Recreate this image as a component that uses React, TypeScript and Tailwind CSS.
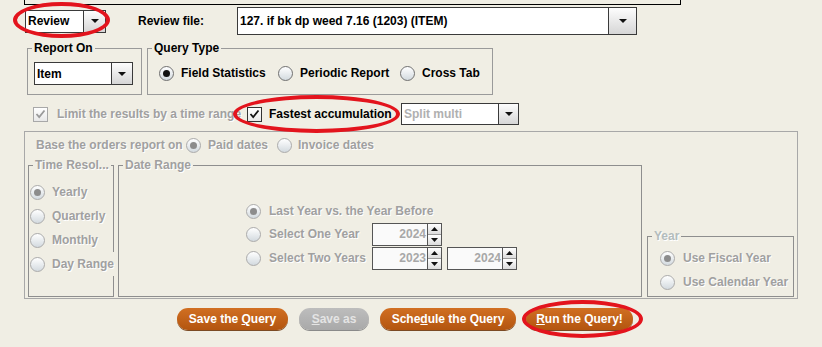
import React from "react";

const muted = "text-[#a0a0a0] [text-shadow:1px_1px_0_#ffffff]";

function Tri({ up = false, small = false }: { up?: boolean; small?: boolean }) {
  const w = small ? 7 : 8;
  const h = 4;
  return (
    <svg width={w} height={h} viewBox={`0 0 ${w} ${h}`} className="block">
      <polygon points={up ? `0,${h} ${w / 2},0 ${w},${h}` : `0,0 ${w},0 ${w / 2},${h}`} fill="#111" />
    </svg>
  );
}

function Combo({
  text,
  className,
  btn,
  dim = false,
}: {
  text: string;
  className: string;
  btn: string;
  dim?: boolean;
}) {
  return (
    <div className={`flex bg-white border border-[#3a3a3a] ${className}`}>
      <div
        className={`flex-1 flex items-center pl-[2px] whitespace-nowrap overflow-hidden ${
          dim ? "text-[#b0b0b0]" : "text-black"
        }`}
      >
        {text}
      </div>
      <div
        className={`${btn} border-l border-[#3a3a3a] bg-linear-to-b from-[#fdfdfd] to-[#d6d6d6] flex items-center justify-center`}
      >
        <Tri />
      </div>
    </div>
  );
}

function Radio({ on = false, dim = false }: { on?: boolean; dim?: boolean }) {
  return (
    <span
      className={`w-[15px] h-[15px] rounded-full border shrink-0 flex items-center justify-center bg-linear-to-b from-[#ffffff] to-[#d3dadf] ${
        dim ? "border-[#ababab]" : "border-[#707070]"
      }`}
    >
      {on && (
        <span className={`w-[7px] h-[7px] rounded-full ${dim ? "bg-[#8c8c8c]" : "bg-[#111111]"}`} />
      )}
    </span>
  );
}

function Check({ dim = false }: { dim?: boolean }) {
  return (
    <span
      className={`w-[15px] h-[15px] border shrink-0 flex items-center justify-center bg-linear-to-b from-[#ffffff] to-[#e8e8e8] ${
        dim ? "border-[#a8a8a8]" : "border-[#333333]"
      }`}
    >
      <svg width="11" height="10" viewBox="0 0 11 10">
        <path
          d="M1.5 5 L4.2 8 L9.5 1.5"
          fill="none"
          stroke={dim ? "#9a9a9a" : "#111"}
          strokeWidth="1.8"
        />
      </svg>
    </span>
  );
}

function Spinner({ value, className = "" }: { value: string; className?: string }) {
  return (
    <div className={`flex w-[70px] h-[23px] ${className}`}>
      <div className="flex-1 bg-[#fafafa] border border-[#555555] flex items-center justify-end pr-[1px] text-[#a8a8a8]">
        {value}
      </div>
      <div className="w-[14px] flex flex-col border-y border-r border-[#555555]">
        <div className="flex-1 flex items-center justify-center bg-linear-to-b from-[#ffffff] to-[#dcdcdc] border-b border-[#9a9a9a]">
          <Tri up small />
        </div>
        <div className="flex-1 flex items-center justify-center bg-linear-to-b from-[#ffffff] to-[#dcdcdc]">
          <Tri small />
        </div>
      </div>
    </div>
  );
}

function Group({
  title,
  className,
  legend = "",
  children,
}: {
  title: string;
  className: string;
  legend?: string;
  children?: React.ReactNode;
}) {
  return (
    <fieldset className={`border shrink-0 min-w-0 ${className}`}>
      <legend className={`ml-[4px] px-[2px] leading-[14px] ${legend}`}>{title}</legend>
      {children}
    </fieldset>
  );
}

function Btn({ children, grey = false, className }: { children: React.ReactNode; grey?: boolean; className: string }) {
  return (
    <div
      className={`h-[22px] rounded-full flex items-center justify-center ${
        grey
          ? "bg-linear-to-b from-[#bdbdbd] to-[#a9a9a9] text-[#e4e4e4] shadow-[0_1px_0_#8a8a8a]"
          : "bg-linear-to-b from-[#d16f22] to-[#b3550f] text-white shadow-[0_1px_0_#7b4a24]"
      } ${className}`}
    >
      {children}
    </div>
  );
}

function Ring({ className }: { className: string }) {
  return <div className={`absolute rounded-[50%] border-[4px] border-[#e3141d] pointer-events-none ${className}`} />;
}

export default function App() {
  return (
    <div className="relative w-[822px] h-[347px] overflow-hidden bg-[#f0eee4] font-['Liberation_Sans',Arial,sans-serif] text-[12px] font-bold leading-[14px] text-black">
      <div className="ml-[24px] w-[657px] h-[5px] border-x border-b border-black" />

      <div className="mt-[2px] flex items-center h-[28px]">
        <Combo text="Review" className="ml-[25px] w-[81px] h-[23px]" btn="w-[22px]" />
        <span className="ml-[32px] w-[99px]">Review file:</span>
        <Combo
          text="127. if bk dp weed 7.16 (1203) (ITEM)"
          className="w-[400px] h-[28px]"
          btn="w-[28px]"
        />
      </div>

      <div className="mt-[6px] flex">
        <Group title="Report On" className="ml-[27px] w-[115px] h-[54px] border-[#9a9a9a]">
          <Combo text="Item" className="ml-[6px] mt-[7px] w-[99px] h-[23px]" btn="w-[21px]" />
        </Group>
        <Group title="Query Type" className="ml-[5px] w-[346px] h-[54px] border-[#9a9a9a]">
          <div className="mt-[7px] h-[22px] flex items-center pl-[11px]">
            <Radio on />
            <span className="ml-[7px] w-[97px]">Field Statistics</span>
            <Radio />
            <span className="ml-[7px] w-[100px]">Periodic Report</span>
            <Radio />
            <span className="ml-[7px]">Cross Tab</span>
          </div>
        </Group>
      </div>

      <div className="mt-[8px] h-[22px] flex items-center">
        <span className="ml-[33px]">
          <Check dim />
        </span>
        <span className={`ml-[9px] w-[190px] whitespace-nowrap ${muted}`}>Limit the results by a time range</span>
        <Check />
        <span className="ml-[7px] w-[132px] whitespace-nowrap">Fastest accumulation</span>
        <Combo text="Split multi" className="w-[118px] h-[22px]" btn="w-[20px]" dim />
      </div>

      <div className="mt-[6px] ml-[24px] w-[774px] h-[168px] border border-[#a8a8a8]">
        <div className="mt-[3px] h-[20px] flex items-center pl-[11px]">
          <span className={`w-[150px] whitespace-nowrap ${muted}`}>Base the orders report on</span>
          <Radio on dim />
          <span className={`ml-[7px] w-[69px] ${muted}`}>Paid dates</span>
          <Radio dim />
          <span className={`ml-[6px] ${muted}`}>Invoice dates</span>
        </div>

        <div className="mt-[3px] ml-[3px] flex items-end">
          <Group
            title="Time Resol..."
            className="w-[86px] h-[139px] border-[#8e8e8e]"
            legend={`ml-[4px] ${muted}`}
          >
            <div className="pt-[8px]">
              {["Yearly", "Quarterly", "Monthly"].map((t, i) => (
                <div key={t} className="h-[24px] flex items-center pl-[1px]">
                  <Radio on={i === 0} dim />
                  <span className={`ml-[7px] ${muted}`}>{t}</span>
                </div>
              ))}
              <div className="relative h-[24px] w-[87px] flex items-center pl-[1px] bg-[#f0eee4]">
                <Radio dim />
                <span className={`ml-[7px] whitespace-nowrap ${muted}`}>Day Range</span>
              </div>
            </div>
          </Group>

          <Group
            title="Date Range"
            className="ml-[4px] w-[524px] h-[139px] border-[#8e8e8e]"
            legend={`ml-[4px] ${muted}`}
          >
            <div className="pt-[28px] pl-[127px]">
              <div className="h-[22px] flex items-center">
                <Radio on dim />
                <span className={`ml-[8px] ${muted}`}>Last Year vs. the Year Before</span>
              </div>
              <div className="h-[24px] flex items-center">
                <Radio dim />
                <span className={`ml-[8px] w-[103px] whitespace-nowrap ${muted}`}>Select One Year</span>
                <Spinner value="2024" />
              </div>
              <div className="h-[24px] flex items-center">
                <Radio dim />
                <span className={`ml-[8px] w-[103px] whitespace-nowrap ${muted}`}>Select Two Years</span>
                <Spinner value="2023" />
                <Spinner value="2024" className="ml-[5px]" />
              </div>
            </div>
          </Group>

          <Group
            title="Year"
            className="ml-[5px] w-[147px] h-[68px] border-[#8e8e8e]"
            legend="ml-[4px] text-[#b3bcbc] [text-shadow:1px_1px_0_#ffffff]"
          >
            <div className="pt-[3px] pl-[12px]">
              <div className="h-[24px] flex items-center">
                <Radio on dim />
                <span className={`ml-[8px] ${muted}`}>Use Fiscal Year</span>
              </div>
              <div className="h-[24px] flex items-center">
                <Radio dim />
                <span className={`ml-[8px] ${muted}`}>Use Calendar Year</span>
              </div>
            </div>
          </Group>
        </div>
      </div>

      <div className="mt-[9px] flex">
        <Btn className="ml-[177px] w-[111px]">
          <span>
            Save the <u>Q</u>uery
          </span>
        </Btn>
        <Btn grey className="ml-[11px] w-[70px]">
          <span>
            <u>S</u>ave as
          </span>
        </Btn>
        <Btn className="ml-[11px] w-[136px]">
          <span>
            Sche<u>d</u>ule the Query
          </span>
        </Btn>
        <Btn className="ml-[10px] w-[107px]">
          <span>
            <u>R</u>un the Query!
          </span>
        </Btn>
      </div>

      <Ring className="left-[13px] top-[2px] w-[97px] h-[36px]" />
      <Ring className="left-[233px] top-[95px] w-[167px] h-[38px]" />
      <Ring className="left-[522px] top-[300px] w-[121px] h-[38px]" />
    </div>
  );
}
